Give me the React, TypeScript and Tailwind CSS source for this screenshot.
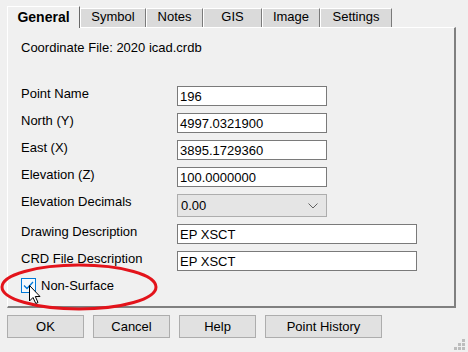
import React from "react";

const font = { fontFamily: '"Liberation Sans", Arial, sans-serif' };

function Tab({ label, w }: { label: string; w: number }) {
  return (
    <div
      className="h-[19px] bg-[#dadada] border-l border-t border-white border-r border-r-[#7a7a7a] flex justify-center text-[13px] leading-[15px] text-black"
      style={{ width: w }}
    >
      {label}
    </div>
  );
}

function Input({ value, w }: { value: string; w: string }) {
  return (
    <div className={`h-[20px] ${w} bg-white border border-[#7a7a7a] pl-[2px] flex items-center text-[13px] leading-[15px] text-black`}>
      {value}
    </div>
  );
}

function Label({ children }: { children: React.ReactNode }) {
  return <div className="text-[13px] leading-[15px] text-black">{children}</div>;
}

function Btn({ label, w }: { label: string; w: string }) {
  return (
    <div className={`h-[23px] ${w} bg-[#e1e1e1] border border-[#adadad] flex items-center justify-center text-[13px] leading-[15px] text-black`}>
      {label}
    </div>
  );
}

export default function App() {
  return (
    <div className="relative w-[468px] h-[352px] bg-[#f0f0f0] overflow-hidden" style={font}>
      {/* tab strip */}
      <div className="flex items-end pl-[7px] pt-[6px] h-[27px]">
        <div className="relative z-10 h-[22px] w-[73px] -mb-px bg-[#f0f0f0] border-l border-t border-white border-r border-r-[#696969] flex justify-center pt-[2px] text-[14px] leading-[16px] font-bold text-black">
          General
        </div>
        <Tab label="Symbol" w={66} />
        <Tab label="Notes" w={57} />
        <Tab label="GIS" w={59} />
        <Tab label="Image" w={58} />
        <Tab label="Settings" w={72} />
      </div>

      {/* panel */}
      <div className="ml-[7px] w-[449px] h-[281px] border-l border-t border-white border-r-2 border-b-2 border-r-[#808080] border-b-[#808080] pl-[13px]">
        <div className="mt-[12px] text-[13px] leading-[15px] text-black">Coordinate File: 2020 icad.crdb</div>

        <div className="mt-[31px] grid grid-cols-[156px_auto] gap-y-[7px] items-start">
          <Label>Point Name</Label>
          <Input value="196" w="w-[150px]" />
          <Label>North (Y)</Label>
          <Input value="4997.0321900" w="w-[150px]" />
          <Label>East (X)</Label>
          <Input value="3895.1729360" w="w-[150px]" />
          <Label>Elevation (Z)</Label>
          <Input value="100.0000000" w="w-[150px]" />
          <Label>Elevation Decimals</Label>
          <div className="h-[23px] w-[150px] bg-[#e5e5e5] border border-[#adadad] pl-[3px] pr-[8px] flex items-center justify-between text-[13px] leading-[15px] text-black">
            <span>0.00</span>
            <svg width="10" height="6" viewBox="0 0 10 6">
              <path d="M0.5 0.5 L5 5 L9.5 0.5" fill="none" stroke="#606060" strokeWidth="1" />
            </svg>
          </div>
          <Label>Drawing Description</Label>
          <Input value="EP XSCT" w="w-[240px]" />
          <Label>CRD File Description</Label>
          <Input value="EP XSCT" w="w-[240px]" />
        </div>

        <div className="mt-[7px] flex items-center gap-[5px]">
          <div className="w-[15px] h-[15px] border border-[#0078d7] bg-[#f4f9fd] flex items-center justify-center">
            <svg width="11" height="9" viewBox="0 0 11 9">
              <path d="M1 4.5 L4 7.5 L10 1" fill="none" stroke="#0078d7" strokeWidth="1.3" />
            </svg>
          </div>
          <span className="text-[13px] leading-[15px] text-black">Non-Surface</span>
        </div>
      </div>

      {/* buttons */}
      <div className="mt-[7px] ml-[7px] flex gap-[9px]">
        <Btn label="OK" w="w-[77px]" />
        <Btn label="Cancel" w="w-[77px]" />
        <Btn label="Help" w="w-[77px]" />
        <Btn label="Point History" w="w-[117px]" />
      </div>

      {/* overlays: red ellipse, cursor, grip */}
      <svg className="absolute left-0 top-0 pointer-events-none" width="468" height="352">
        <ellipse cx="79" cy="287" rx="77" ry="22" fill="none" stroke="#e3131b" strokeWidth="3" />
        <g transform="translate(29 285)">
          <path d="M0.5 0.5 L0.5 16 L4 12.5 L6.8 18.5 L9 17.5 L6.3 11.5 L11 11.5 Z" fill="#ffffff" stroke="#000000" strokeWidth="1" strokeLinejoin="round" />
        </g>
        <g fill="#bdbdbd">
          <rect x="462" y="339" width="3" height="3" />
          <rect x="458" y="343" width="3" height="3" />
          <rect x="462" y="343" width="3" height="3" />
          <rect x="454" y="347" width="3" height="3" />
          <rect x="458" y="347" width="3" height="3" />
          <rect x="462" y="347" width="3" height="3" />
        </g>
      </svg>
    </div>
  );
}
